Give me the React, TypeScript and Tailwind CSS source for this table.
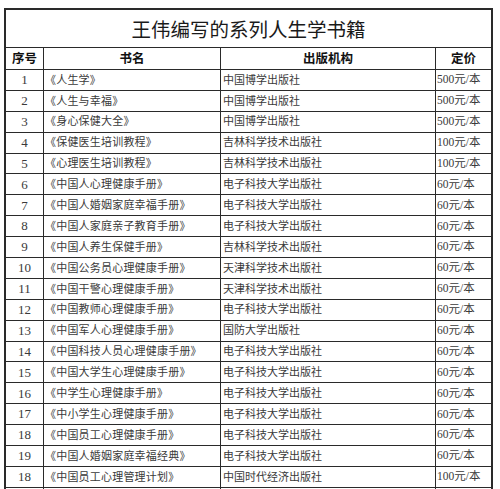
import React from "react";

const rows: [string, string, string, string][] = [
  ["1", "《人生学》", "中国博学出版社", "500元/本"],
  ["2", "《人生与幸福》", "中国博学出版社", "500元/本"],
  ["3", "《身心保健大全》", "中国博学出版社", "500元/本"],
  ["4", "《保健医生培训教程》", "吉林科学技术出版社", "100元/本"],
  ["5", "《心理医生培训教程》", "吉林科学技术出版社", "100元/本"],
  ["6", "《中国人心理健康手册》", "电子科技大学出版社", "60元/本"],
  ["7", "《中国人婚姻家庭幸福手册》", "电子科技大学出版社", "60元/本"],
  ["8", "《中国人家庭亲子教育手册》", "电子科技大学出版社", "60元/本"],
  ["9", "《中国人养生保健手册》", "吉林科学技术出版社", "60元/本"],
  ["10", "《中国公务员心理健康手册》", "天津科学技术出版社", "60元/本"],
  ["11", "《中国干警心理健康手册》", "天津科学技术出版社", "60元/本"],
  ["12", "《中国教师心理健康手册》", "电子科技大学出版社", "60元/本"],
  ["13", "《中国军人心理健康手册》", "国防大学出版社", "60元/本"],
  ["14", "《中国科技人员心理健康手册》", "电子科技大学出版社", "60元/本"],
  ["15", "《中国大学生心理健康手册》", "电子科技大学出版社", "60元/本"],
  ["16", "《中学生心理健康手册》", "电子科技大学出版社", "60元/本"],
  ["17", "《中小学生心理健康手册》", "电子科技大学出版社", "60元/本"],
  ["18", "《中国员工心理健康手册》", "电子科技大学出版社", "60元/本"],
  ["19", "《中国人婚姻家庭幸福经典》", "电子科技大学出版社", "60元/本"],
  ["18", "《中国员工心理管理计划》", "中国时代经济出版社", "100元/本"],
];

const serif = "font-['Liberation_Serif','Noto_Sans_CJK_SC',serif]";

export default function App() {
  return (
    <div className="w-[500px] h-[489px] overflow-hidden bg-white pt-[8px] pl-[4px]">
      <div className="w-[489px] border-t-2 border-l-2 border-r-2 border-[#2a2a2a] text-[#3a3a3a]">
        <div className="h-[37px] flex items-center justify-center text-[19.5px] text-[#1a1a1a] font-['Noto_Sans_CJK_SC',sans-serif]">
          王伟编写的系列人生学书籍
        </div>
        <div className="h-[22px] flex border-t border-[#2a2a2a] text-[12.5px] font-bold text-[#111] font-['Noto_Sans_CJK_SC',sans-serif]">
          <div className="w-[37px] flex items-center justify-center">序号</div>
          <div className="w-[177px] border-l border-[#2a2a2a] flex items-center justify-center">书名</div>
          <div className="w-[215px] border-l border-[#2a2a2a] flex items-center justify-center">出版机构</div>
          <div className="w-[56px] border-l border-[#2a2a2a] flex items-center justify-center">定价</div>
        </div>
        {rows.map((r, i) => (
          <div key={i} className={`h-[20.9px] flex border-t border-[#2a2a2a] text-[11px] ${serif}`}>
            <div className="w-[37px] flex items-center justify-center text-[13px]">{r[0]}</div>
            <div className="w-[177px] border-l border-[#2a2a2a] flex items-center pl-[1px] tracking-[0.2px]">{r[1]}</div>
            <div className="w-[215px] border-l border-[#2a2a2a] flex items-center pl-[2px]">{r[2]}</div>
            <div className="w-[56px] border-l border-[#2a2a2a] flex items-center pl-[1px] text-[11.5px]">{r[3]}</div>
          </div>
        ))}
        <div className="h-[20.9px] flex border-t border-[#2a2a2a]">
          <div className="w-[37px]"></div>
          <div className="w-[177px] border-l border-[#2a2a2a]"></div>
          <div className="w-[215px] border-l border-[#2a2a2a]"></div>
          <div className="w-[56px] border-l border-[#2a2a2a]"></div>
        </div>
      </div>
    </div>
  );
}
